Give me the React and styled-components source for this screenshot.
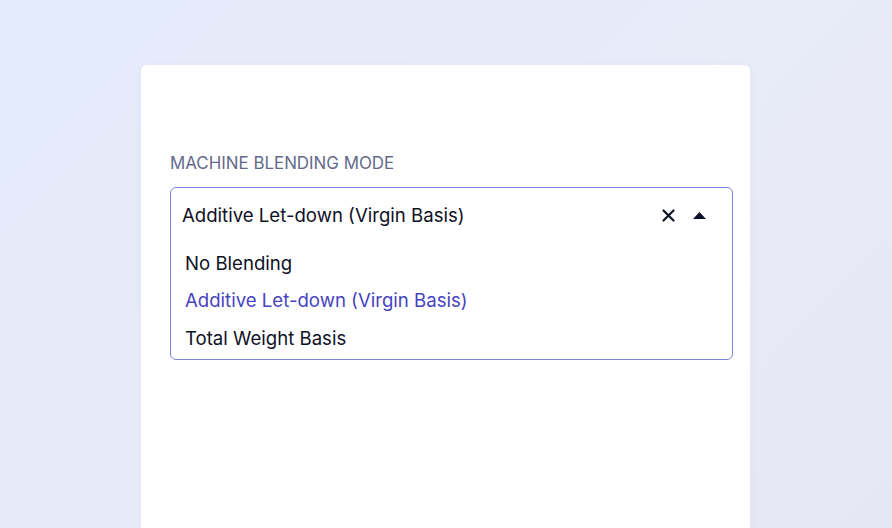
import React from "react";
import styled, { createGlobalStyle } from "styled-components";

const Global = createGlobalStyle`
  html, body { margin: 0; padding: 0; height: 100%; }
  body {
    background: linear-gradient(135deg, #e4ebfb 0%, #e8ebf8 55%, #e6e7f3 100%);
    font-family: Inter, "Noto Sans", sans-serif;
    overflow: hidden;
  }
`;

const Page = styled.div`
  height: 528px;
  padding: 65px 0 0 141px;
  box-sizing: border-box;
`;

const Card = styled.div`
  width: 609px;
  height: 480px;
  background: #ffffff;
  border-radius: 6px;
  box-sizing: border-box;
  padding: 87px 17px 0 29px;
  box-shadow: 0 2px 10px rgba(120, 130, 190, 0.06);
`;

const Label = styled.div`
  font-size: 16.9px;
  line-height: 22px;
  color: #646a8a;
  margin-bottom: 13px;
`;

const Select = styled.div`
  border: 1.6px solid #7f84d6;
  border-radius: 6px;
  overflow: hidden;
`;

const Control = styled.div`
  height: 54px;
  display: flex;
  align-items: center;
  padding: 0 25px 0 11px;
`;

const Value = styled.div`
  flex: 1;
  font-size: 18.6px;
  color: #0f1126;
`;

const Icons = styled.div`
  display: flex;
  align-items: center;
  gap: 17px;
`;

const Menu = styled.div`
  padding: 2px 0 2px;
`;

const Option = styled.div`
  height: 37.5px;
  display: flex;
  align-items: center;
  padding-left: 14px;
  font-size: 18.6px;
  color: ${(p) => (p.$selected ? "#4744c0" : "#0f1126")};
`;

const options = ["No Blending", "Additive Let-down (Virgin Basis)", "Total Weight Basis"];

export default function App() {
  return (
    <>
      <Global />
      <Page>
        <Card>
          <Label>MACHINE BLENDING MODE</Label>
          <Select>
            <Control>
              <Value>Additive Let-down (Virgin Basis)</Value>
              <Icons>
                <svg width="13" height="13" viewBox="0 0 13 13">
                  <path d="M1.5 1.5 L11.5 11.5 M11.5 1.5 L1.5 11.5" stroke="#101328" strokeWidth="2.2" strokeLinecap="round" />
                </svg>
                <svg width="15" height="9" viewBox="0 0 15 9">
                  <path d="M7.5 1 L14 8 L1 8 Z" fill="#101328" />
                </svg>
              </Icons>
            </Control>
            <Menu>
              {options.map((o, i) => (
                <Option key={o} $selected={i === 1}>{o}</Option>
              ))}
            </Menu>
          </Select>
        </Card>
      </Page>
    </>
  );
}
